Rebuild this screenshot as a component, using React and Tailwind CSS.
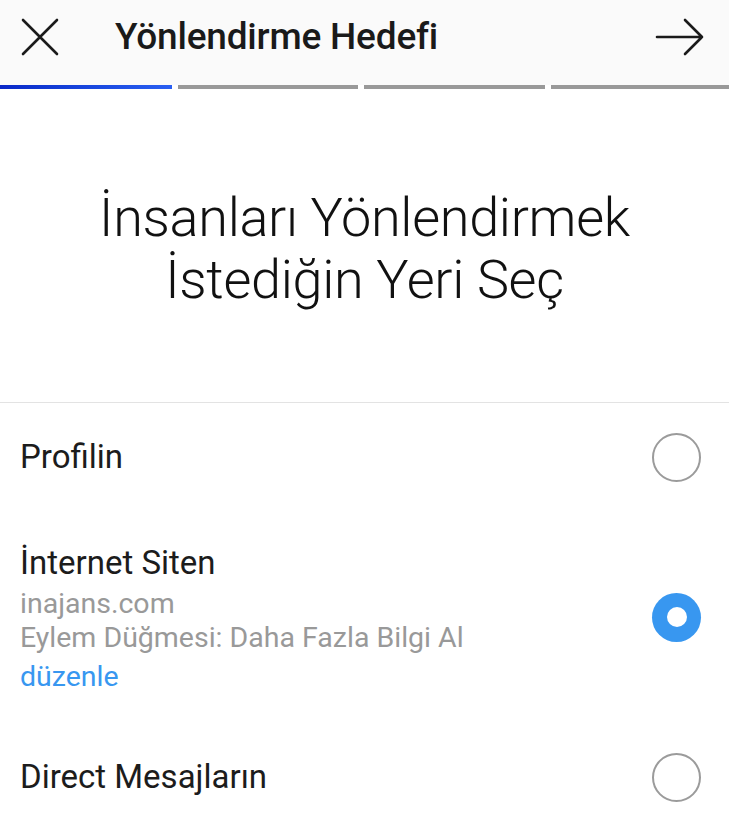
import React, { useState } from "react";

const options = [
  { id: "profile", title: "Profilin", row: "h-[108px]" },
  {
    id: "website",
    title: "İnternet Siten",
    lines: ["inajans.com", "Eylem Düğmesi: Daha Fazla Bilgi Al"],
    edit: "düzenle",
    row: "h-[212px]",
    body: "pt-[3px]",
  },
  { id: "direct", title: "Direct Mesajların", row: "h-[108px]" },
];

function Radio({ checked }) {
  return checked ? (
    <span className="flex h-[49px] w-[49px] shrink-0 items-center justify-center rounded-full bg-[#3897f0]">
      <span className="h-[20px] w-[20px] rounded-full bg-white" />
    </span>
  ) : (
    <span className="h-[49px] w-[49px] shrink-0 rounded-full border-2 border-[#9b9b9b]" />
  );
}

export default function App() {
  const [selected, setSelected] = useState("website");

  return (
    <div className="min-h-screen bg-white text-[#262626] font-['Roboto','Noto_Sans',sans-serif]">
      {/* Top bar */}
      <header className="bg-[#fafafa]">
        <div className="flex h-[85px] items-center pb-[11px]">
          <button type="button" className="ml-[20px] flex h-[40px] w-[40px] items-center justify-center">
            <svg width="40" height="40" viewBox="0 0 40 40" fill="none" stroke="#1a1a1a" strokeWidth="2.6" strokeLinecap="round">
              <path d="M3 3 L37 37 M37 3 L3 37" />
            </svg>
          </button>
          <h1 className="ml-[55px] flex-1 text-[37px] font-medium leading-[44px] tracking-[-0.2px] text-[#1a1a1a]">
            Yönlendirme Hedefi
          </h1>
          <button type="button" className="mr-[24px] flex h-[40px] w-[50px] items-center justify-center">
            <svg width="50" height="40" viewBox="0 0 50 40" fill="none" stroke="#1a1a1a" strokeWidth="2.6" strokeLinecap="round" strokeLinejoin="round">
              <path d="M2 20 H47 M30 3 L47 20 L30 37" />
            </svg>
          </button>
        </div>
        {/* step progress */}
        <div className="flex gap-[6px] bg-white">
          <div className="h-[4px] w-[172px] bg-gradient-to-r from-[#0a28c8] to-[#2a5ff2]" />
          <div className="h-[4px] w-[180px] bg-[#999999]" />
          <div className="h-[4px] w-[181px] bg-[#999999]" />
          <div className="h-[4px] flex-1 bg-[#999999]" />
        </div>
      </header>

      {/* Heading */}
      <section className="border-b border-[#e3e3e3] pt-[98px] pb-[91px]">
        <p className="text-center text-[54px] font-light leading-[62px] tracking-[-0.3px] text-[#111]">
          İnsanları Yönlendirmek
          <br />
          İstediğin Yeri Seç
        </p>
      </section>

      {/* Options */}
      <div>
        {options.map((o) => (
          <button
            key={o.id}
            type="button"
            onClick={() => setSelected(o.id)}
            className={`flex w-full items-center justify-between pl-[20px] pr-[28px] text-left ${o.row}`}
          >
            <div className={o.body}>
              <p className="text-[33px] leading-[40px] text-[#1c1c1c]">{o.title}</p>
              {o.lines ? (
                <div className="mt-[4px]">
                  {o.lines.map((l) => (
                    <p key={l} className="text-[28.5px] leading-[34px] text-[#999999]">
                      {l}
                    </p>
                  ))}
                </div>
              ) : null}
              {o.edit ? (
                <p className="mt-[5px] text-[28.5px] leading-[34px] text-[#3897f0]">{o.edit}</p>
              ) : null}
            </div>
            <Radio checked={selected === o.id} />
          </button>
        ))}
      </div>
    </div>
  );
}
